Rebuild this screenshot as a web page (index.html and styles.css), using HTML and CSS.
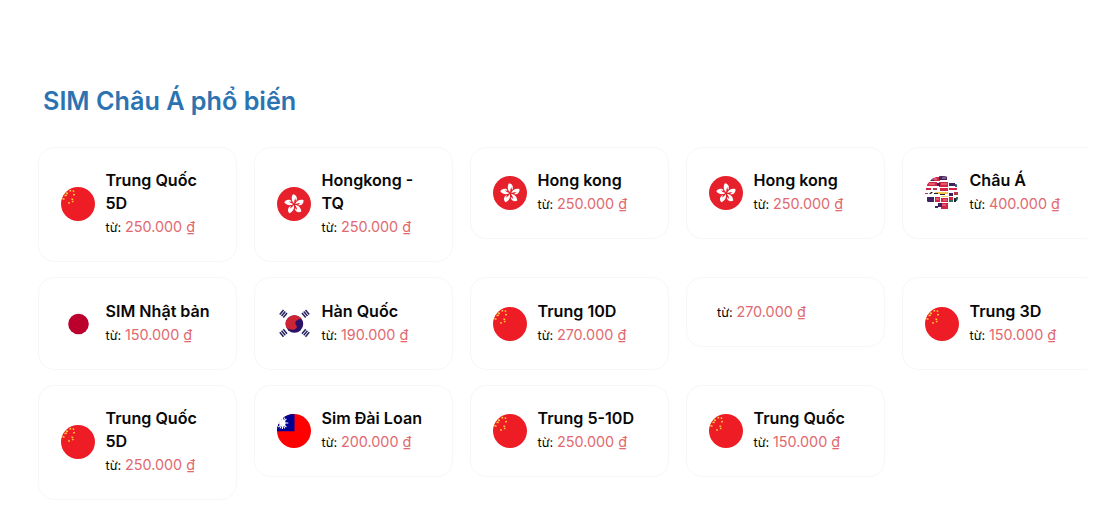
FILE: index.html
```html
<!DOCTYPE html>
<html lang="vi">
<head>
<meta charset="utf-8">
<title>SIM Châu Á phổ biến</title>
<link rel="stylesheet" href="styles.css">
</head>
<body>
<svg class="sprite" aria-hidden="true">
  <defs>
    <clipPath id="round"><circle cx="17" cy="17" r="17"/></clipPath>
    <path id="petal" d="M0-1C-2.4-2.6-3.6-6.4-1.4-10C1.8-9.8 3.6-6.4 2-3.4C1.3-4.2 1-5.2 1.3-6.4C0-5-.2-2.6 0-1Z"/>
    <g id="trigram"><path d="M-2.9-2.3H2.9M-2.9 0H2.9M-2.9 2.3H2.9"/></g>
    <symbol id="cn" viewBox="0 0 34 34">
      <circle cx="17" cy="17" r="17" fill="#ee1c25"/>
      <path d="M1.5 11.5l2 .8M3.5 8.5l2.3-.3M5 6l2 .5M8.5 4.2l1.7-.7M11.8 3.6l1.3 1.2M12.2 8l1.8-.6M10.5 12l1.7.7M7.2 15.5l1.6.8M11 15l1.5-1" stroke="#f8cf3a" stroke-width="1.4"/>
    </symbol>
    <symbol id="hk" viewBox="0 0 34 34">
      <circle cx="17" cy="17" r="17" fill="#e6212b"/>
      <g transform="translate(17.3 17.3)" fill="#fff">
        <use href="#petal"/><use href="#petal" transform="rotate(72)"/><use href="#petal" transform="rotate(144)"/><use href="#petal" transform="rotate(216)"/><use href="#petal" transform="rotate(288)"/>
      </g>
    </symbol>
    <symbol id="jp" viewBox="0 0 34 34"><circle cx="17.5" cy="17" r="10.3" fill="#bc002d"/></symbol>
    <symbol id="kr" viewBox="0 0 34 34">
      <g transform="translate(17.4 17)">
        <circle r="8.8" fill="#2b1168"/>
        <path d="M-7.3-4.9A8.8 8.8 0 0 1 7.3-4.9C5-5.4 1.8-4.4.8-1.2C.8 1.2 3 1.6 2.4 3.4C.6 6.6-5 6.4-8.2 3.2A8.8 8.8 0 0 1-7.3-4.9Z" fill="#cd2435"/>
      </g>
      <g stroke="#25205f" stroke-width="1.5">
        <use href="#trigram" transform="translate(6.4 6.8) rotate(-50)"/><use href="#trigram" transform="translate(28.6 6.8) rotate(50)"/>
        <use href="#trigram" transform="translate(6.4 26) rotate(50)"/><use href="#trigram" transform="translate(28.6 26) rotate(-50)"/>
      </g>
    </symbol>
    <symbol id="tw" viewBox="0 0 34 34">
      <g clip-path="url(#round)"><path fill="#fe0000" d="M0 0h34v34H0z"/><path fill="#000095" d="M0 0h17.5v17.3H0z"/></g>
      <circle cx="5.4" cy="9" r="3.2" fill="#fff"/>
      <path d="M5.4 3v12M.3 9h11M1.4 4.8l8 8.4M1.4 13.2l8-8.4M3.1 3.6l4.6 10.8M3.1 14.4L7.7 3.6" stroke="#fff" stroke-width="1.1"/>
    </symbol>
    <symbol id="asia" viewBox="0 0 34 34">
      <g clip-path="url(#round)">
        <path fill="#d32443" d="M6 1h9v4H6zM2 6h10v4H2zM14 6h9v5h-9zM1 12h5v2H1zM15 12h8v3h-8zM24 12h8v2h-8zM10 21h5v5h-5zM16 22h7v4h-7zM24 21h4v3h-4zM16 27h7v6h-7z"/>
        <path fill="#40225e" d="M4 2h5v3H4zM14 0h8v4h-8zM12 7h3v3h-3zM24 7h6v3h-6zM2 21h7v5H2zM24 17h4v3h-4zM13 27h4v4h-4zM10 30h3v2h-3z"/>
        <path fill="#f4c857" d="M10 16h13v2H10zM16 20h7v1h-7z"/>
        <path fill="#b8374d" d="M8 12h4v2H8zM0 17h3v1H0zM29 16h4v3h-4zM26 2h2v1h-2z"/>
        <path fill="#272326" d="M4 18l2-2h2l-2 2zM9 17h4v1H9zM15 18h5v1h-5zM29 22h2v4h-2z"/>
        <path fill="#28705e" d="M24 24h4v2h-4zM31 21h2v4h-2zM30 8h2v3h-2z"/>
        <path d="M7 3h5M17 2h4M4 8h6M16 8h6M11 23h3M18 24h4M17 29h4" stroke="#f4a9b4" stroke-width=".8"/>
      </g>
    </symbol>
  </defs>
</svg>
<main class="section">
  <h2 class="heading">SIM Châu Á phổ biến</h2>
  <div class="grid">
    <a class="card"><svg class="flag"><use href="#cn"/></svg><div class="info"><h3 class="name">Trung Quốc 5D</h3><p class="price">từ: <span class="amount">250.000 ₫</span></p></div></a>
    <a class="card"><svg class="flag"><use href="#hk"/></svg><div class="info"><h3 class="name">Hongkong - TQ</h3><p class="price">từ: <span class="amount">250.000 ₫</span></p></div></a>
    <a class="card"><svg class="flag"><use href="#hk"/></svg><div class="info"><h3 class="name">Hong kong</h3><p class="price">từ: <span class="amount">250.000 ₫</span></p></div></a>
    <a class="card"><svg class="flag"><use href="#hk"/></svg><div class="info"><h3 class="name">Hong kong</h3><p class="price">từ: <span class="amount">250.000 ₫</span></p></div></a>
    <a class="card"><svg class="flag"><use href="#asia"/></svg><div class="info"><h3 class="name">Châu Á</h3><p class="price">từ: <span class="amount">400.000 ₫</span></p></div></a>
    <a class="card card-mid"><svg class="flag"><use href="#jp"/></svg><div class="info"><h3 class="name">SIM Nhật bản</h3><p class="price">từ: <span class="amount">150.000 ₫</span></p></div></a>
    <a class="card card-mid"><svg class="flag"><use href="#kr"/></svg><div class="info"><h3 class="name">Hàn Quốc</h3><p class="price">từ: <span class="amount">190.000 ₫</span></p></div></a>
    <a class="card card-mid"><svg class="flag"><use href="#cn"/></svg><div class="info"><h3 class="name">Trung 10D</h3><p class="price">từ: <span class="amount">270.000 ₫</span></p></div></a>
    <a class="card card-plain"><div class="info"><p class="price">từ: <span class="amount">270.000 ₫</span></p></div></a>
    <a class="card card-mid"><svg class="flag"><use href="#cn"/></svg><div class="info"><h3 class="name">Trung 3D</h3><p class="price">từ: <span class="amount">150.000 ₫</span></p></div></a>
    <a class="card"><svg class="flag"><use href="#cn"/></svg><div class="info"><h3 class="name">Trung Quốc 5D</h3><p class="price">từ: <span class="amount">250.000 ₫</span></p></div></a>
    <a class="card"><svg class="flag"><use href="#tw"/></svg><div class="info"><h3 class="name">Sim Đài Loan</h3><p class="price">từ: <span class="amount">200.000 ₫</span></p></div></a>
    <a class="card"><svg class="flag"><use href="#cn"/></svg><div class="info"><h3 class="name">Trung 5-10D</h3><p class="price">từ: <span class="amount">250.000 ₫</span></p></div></a>
    <a class="card"><svg class="flag"><use href="#cn"/></svg><div class="info"><h3 class="name">Trung Quốc</h3><p class="price">từ: <span class="amount">150.000 ₫</span></p></div></a>
  </div>
</main>
</body>
</html>
```

FILE: styles.css
```css
* { box-sizing: border-box; }
body {
  margin: 0;
  background: #fff;
  color: #080808;
  font-family: Inter, "Liberation Sans", sans-serif;
}
.sprite { display: block; width: 0; height: 0; }
.section {
  width: 1087px;
  height: 522px;
  padding: 84px 0 0 38px;
  overflow: hidden;
}
.heading {
  margin: 0 0 29px 5px;
  color: #2b73b1;
  font-size: 25.2px;
  font-weight: 600;
  line-height: 34px;
}
.grid {
  display: grid;
  grid-template-columns: repeat(5, 199px);
  grid-template-rows: 114px 92px 114px;
  gap: 16px 17px;
  align-items: start;
}
.card {
  display: flex;
  align-items: center;
  gap: 10.5px;
  padding: 20.5px 22px 21.5px;
  border: 1px solid #f7f7f7;
  border-radius: 16px;
}
.card-mid { padding-top: 21.5px; }
.card-plain { padding: 21.5px 22px 21.5px 30px; }
.flag { flex: none; width: 34px; height: 34px; }
.info { flex: 1; min-width: 0; }
.name {
  margin: 0;
  font-size: 16.1px;
  font-weight: 600;
  line-height: 23px;
}
.price {
  margin: 0;
  font-size: 12.8px;
  line-height: 24px;
  white-space: nowrap;
}
.amount { color: #e06a70; font-size: 14.4px; }
```
